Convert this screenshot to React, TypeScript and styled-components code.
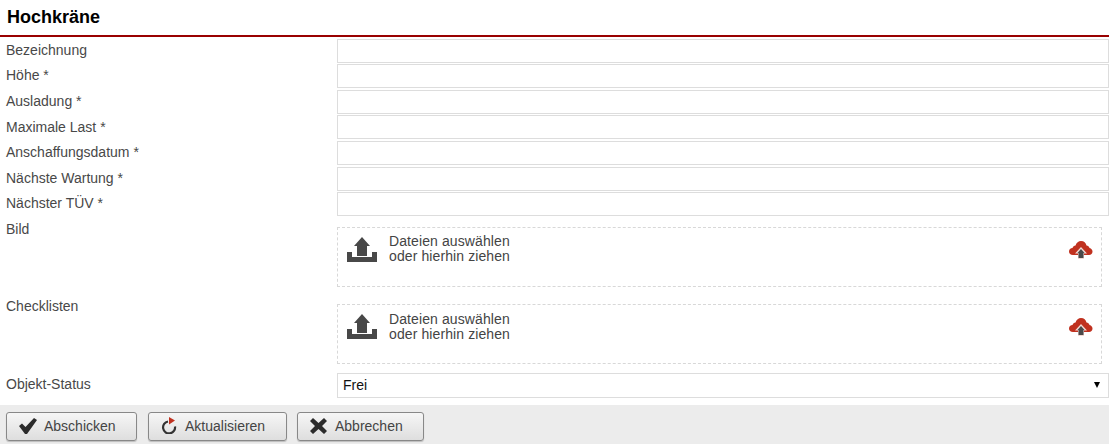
import React from 'react';
import styled, { createGlobalStyle } from 'styled-components';

const GlobalStyle = createGlobalStyle`
  html, body {
    margin: 0;
    padding: 0;
    background: #fff;
    font-family: "Liberation Sans", Arial, sans-serif;
  }
`;

const Page = styled.div`
  width: 1109px;
  height: 444px;
  overflow: hidden;
  display: flex;
  flex-direction: column;
`;

const Title = styled.h1`
  margin: 0;
  height: 35px;
  box-sizing: content-box;
  padding-left: 7px;
  border-bottom: 2px solid #990000;
  font-size: 18px;
  line-height: 35px;
  font-weight: bold;
  color: #000;
`;

const Form = styled.div`
  padding-top: 1.6px;
  flex: 1;
`;

const Row = styled.div`
  display: grid;
  grid-template-columns: 337px 1fr;
  height: 25.6px;
`;

const UploadRow = styled.div<{ $height: number }>`
  display: grid;
  grid-template-columns: 337px 1fr;
  height: ${(p) => p.$height}px;
`;

const Label = styled.label`
  padding-left: 6px;
  padding-top: 1.25px;
  font-size: 14px;
  line-height: 20px;
  color: #484848;
`;

const Input = styled.div`
  box-sizing: border-box;
  height: 24px;
  border: 1px solid #ddd;
  background: #fff;
`;

const DropZone = styled.div`
  box-sizing: border-box;
  width: 765px;
  height: 60px;
  margin-top: 9.2px;
  border: 1px dashed #d8d8d8;
  display: flex;
  align-items: flex-start;
  padding: 6px 20px 0 9px;
`;

const IconWrap = styled.div`
  margin-top: 3px;
  height: 25px;
`;

const DropText = styled.div<{ $top: number }>`
  margin-left: 12px;
  margin-top: ${(p) => p.$top}px;
  font-size: 14px;
  line-height: 15px;
  letter-spacing: 0.1px;
  color: #444;
`;

const CloudWrap = styled.div`
  margin-left: auto;
  margin-top: 6px;
  margin-right: -12px;
  height: 20px;
`;

const StatusSelect = styled.div`
  box-sizing: border-box;
  height: 25px;
  border: 1px solid #ddd;
  display: flex;
  align-items: center;
  justify-content: space-between;
  padding: 0 8px 0 5px;
  font-size: 14px;
  color: #111;
`;

const Arrow = styled.span`
  width: 0;
  height: 0;
  border-left: 3px solid transparent;
  border-right: 3px solid transparent;
  border-top: 6px solid #000;
`;

const Footer = styled.div`
  height: 39px;
  background: #ececec;
  display: flex;
  align-items: flex-start;
  padding: 7px 0 0 6px;
  box-sizing: border-box;
`;

const Button = styled.button<{ $width: number; $gap: number }>`
  box-sizing: border-box;
  width: ${(p) => p.$width}px;
  height: 29px;
  margin-right: ${(p) => p.$gap}px;
  border: 1px solid #888;
  border-radius: 3px;
  background: linear-gradient(#f6f6f6, #dedede);
  box-shadow: 0 1px 1px rgba(0, 0, 0, 0.2);
  display: flex;
  align-items: center;
  padding: 0 0 2px 12px;
  font-family: inherit;
  font-size: 14px;
  color: #444;
`;

const ButtonLabel = styled.span<{ $gap: number }>`
  margin-left: ${(p) => p.$gap}px;
`;

const UploadIcon = () => (
  <svg width="30" height="25" viewBox="0 0 30 25">
    <path d="M15 0 L23 9 H20 V19 H10 V9 H7 Z" fill="#484848" />
    <path d="M0 15 H5 V20 H25 V15 H30 V25 H0 Z" fill="#484848" />
  </svg>
);

const CloudIcon = () => (
  <svg width="24" height="19" viewBox="0 0 24 19">
    <path
      d="M4 15 C1.5 15 0 13.5 0 11.5 C0 9.5 1.5 8 3.5 8 C4 6.5 5 5.5 6.5 5.5 C7.5 2.5 9.5 1 12 1 C15 1 17 3 17.5 5.5 C19 5.5 20 6.5 20.5 8 C22.5 8.5 23.5 10 23.5 11.5 C23.5 13.5 22 15 20 15 Z"
      fill="#c0311f"
    />
    <path d="M12 7 L18 13.5 H15 V19 H9 V13.5 H6 Z" fill="#f3d9d4" />
    <path d="M12 9 L15.5 13 H14.5 V18 H9.5 V13 H8.5 Z" fill="#4a4a4a" />
  </svg>
);

const CheckIcon = () => (
  <svg width="18" height="16" viewBox="0 0 18 16">
    <path d="M0 8 L3 5.5 L6.5 9 L15 0 L18 2 L8 16 H6 Z" fill="#2b2b2b" />
  </svg>
);

const RefreshIcon = () => (
  <svg width="16" height="17" viewBox="0 0 16 17">
    <path d="M7 4.5 A6 6 0 1 0 14 9.5" fill="none" stroke="#333" strokeWidth="2.2" />
    <path d="M8 0 L14 3.5 L8 7.5 Z" fill="#c0311f" />
  </svg>
);

const CrossIcon = () => (
  <svg width="17" height="16" viewBox="0 0 17 16">
    <path d="M3 0 L8.5 5 L14 0 L17 3 L12 8 L17 13 L14 16 L8.5 11 L3 16 L0 13 L5 8 L0 3 Z" fill="#2b2b2b" />
  </svg>
);

const fields = [
  'Bezeichnung',
  'Höhe *',
  'Ausladung *',
  'Maximale Last *',
  'Anschaffungsdatum *',
  'Nächste Wartung *',
  'Nächster TÜV *',
];

const Upload = ({ textTop = 0 }: { textTop?: number }) => (
  <DropZone>
    <IconWrap>
      <UploadIcon />
    </IconWrap>
    <DropText $top={textTop}>
      Dateien auswählen
      <br />
      oder hierhin ziehen
    </DropText>
    <CloudWrap>
      <CloudIcon />
    </CloudWrap>
  </DropZone>
);

export default function App() {
  return (
    <Page>
      <GlobalStyle />
      <Title>Hochkräne</Title>
      <Form>
        {fields.map((field) => (
          <Row key={field}>
            <Label>{field}</Label>
            <Input />
          </Row>
        ))}
        <UploadRow $height={77}>
          <Label>Bild</Label>
          <Upload />
        </UploadRow>
        <UploadRow $height={78.2}>
          <Label>Checklisten</Label>
          <Upload textTop={1} />
        </UploadRow>
        <Row>
          <Label>Objekt-Status</Label>
          <StatusSelect>
            Frei
            <Arrow />
          </StatusSelect>
        </Row>
      </Form>
      <Footer>
        <Button $width={131} $gap={11}>
          <CheckIcon />
          <ButtonLabel $gap={7}>Abschicken</ButtonLabel>
        </Button>
        <Button $width={139} $gap={10}>
          <RefreshIcon />
          <ButtonLabel $gap={8}>Aktualisieren</ButtonLabel>
        </Button>
        <Button $width={127} $gap={0}>
          <CrossIcon />
          <ButtonLabel $gap={8}>Abbrechen</ButtonLabel>
        </Button>
      </Footer>
    </Page>
  );
}
